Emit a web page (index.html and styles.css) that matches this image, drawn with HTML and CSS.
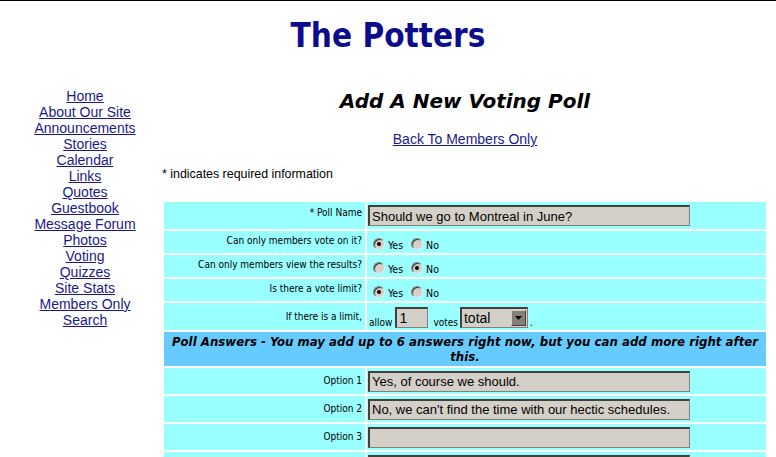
FILE: index.html
```html
<!DOCTYPE html>
<html>
<head>
<meta charset="utf-8">
<title>The Potters - Add A New Voting Poll</title>
<link rel="stylesheet" href="styles.css">
</head>
<body>
<div class="page">
  <h1 class="site-title">The Potters</h1>
  <div class="layout">
    <nav class="nav">
      <a href="#">Home</a>
      <a href="#">About Our Site</a>
      <a href="#">Announcements</a>
      <a href="#">Stories</a>
      <a href="#">Calendar</a>
      <a href="#">Links</a>
      <a href="#">Quotes</a>
      <a href="#">Guestbook</a>
      <a href="#">Message Forum</a>
      <a href="#">Photos</a>
      <a href="#">Voting</a>
      <a href="#">Quizzes</a>
      <a href="#">Site Stats</a>
      <a href="#">Members Only</a>
      <a href="#">Search</a>
    </nav>
    <main class="main">
      <h2 class="page-title">Add A New Voting Poll</h2>
      <p class="back"><a href="#">Back To Members Only</a></p>
      <p class="note">* indicates required information</p>
      <table class="form">
        <tr class="r27">
          <td class="label up4">* Poll Name</td>
          <td class="value"><input class="text" type="text" value="Should we go to Montreal in June?"></td>
        </tr>
        <tr class="r22">
          <td class="label up3">Can only members vote on it?</td>
          <td class="value">
            <span class="choices">
              <label class="choice"><input class="radio" type="radio" name="mvote" checked><span class="small">Yes</span></label>
              <label class="choice"><input class="radio" type="radio" name="mvote"><span class="small">No</span></label>
            </span>
          </td>
        </tr>
        <tr class="r22">
          <td class="label up3">Can only members view the results?</td>
          <td class="value">
            <span class="choices">
              <label class="choice"><input class="radio" type="radio" name="mview"><span class="small">Yes</span></label>
              <label class="choice"><input class="radio" type="radio" name="mview" checked><span class="small">No</span></label>
            </span>
          </td>
        </tr>
        <tr class="r22">
          <td class="label up3">Is there a vote limit?</td>
          <td class="value">
            <span class="choices">
              <label class="choice"><input class="radio" type="radio" name="limit" checked><span class="small">Yes</span></label>
              <label class="choice"><input class="radio" type="radio" name="limit"><span class="small">No</span></label>
            </span>
          </td>
        </tr>
        <tr class="r27">
          <td class="label">If there is a limit,</td>
          <td class="value">
            <span class="limit">
              <span class="small allow">allow</span>
              <input class="text short" type="text" value="1">
              <span class="small votes">votes</span>
              <span class="select"><span class="select-value">total</span><span class="select-btn"><svg width="7" height="4" viewBox="0 0 7 4"><path d="M0 0H7L3.5 4Z" fill="#000"/></svg></span></span>
              <span class="small dot">.</span>
            </span>
          </td>
        </tr>
        <tr class="head">
          <td colspan="2">Poll Answers - You may add up to 6 answers right now, but you can add more right after this.</td>
        </tr>
        <tr class="r26">
          <td class="label">Option 1</td>
          <td class="value"><input class="text" type="text" value="Yes, of course we should."></td>
        </tr>
        <tr class="r26">
          <td class="label">Option 2</td>
          <td class="value"><input class="text" type="text" value="No, we can't find the time with our hectic schedules."></td>
        </tr>
        <tr class="r26">
          <td class="label">Option 3</td>
          <td class="value"><input class="text" type="text" value=""></td>
        </tr>
        <tr class="r26">
          <td class="label">Option 4</td>
          <td class="value"><input class="text" type="text" value=""></td>
        </tr>
      </table>
    </main>
  </div>
</div>
</body>
</html>
```
FILE: styles.css
```css
* { box-sizing: border-box; }

html, body {
  margin: 0;
  background: #fff;
}

body {
  border-top: 1px solid #000;
  color: #000;
  font-family: "Liberation Sans", Arial, sans-serif;
  overflow: hidden;
}

.page {
  padding: 0 8px;
}

.site-title {
  margin: 0;
  padding-top: 15px;
  font: bold 33px/40px "DejaVu Sans Condensed", "DejaVu Sans", sans-serif;
  color: #0c0c8c;
  text-align: center;
}

.layout {
  display: flex;
  margin-top: 32px;
}

.nav {
  width: 154px;
  flex: none;
  display: flex;
  flex-direction: column;
  align-items: center;
  font-size: 14px;
  line-height: 16px;
}

.nav a {
  color: #1a1a8a;
}

.main {
  flex: 1;
  min-width: 0;
  text-align: center;
}

.page-title {
  margin: 1px 0 0;
  font: bold oblique 20px/24px "DejaVu Sans", sans-serif;
  color: #000;
}

.back {
  margin: 18px 0 0;
  font-size: 14px;
  line-height: 16px;
}

.back a {
  color: #1a1a8a;
}

.note {
  margin: 20px 0 0;
  text-align: left;
  font-size: 12.4px;
  line-height: 14px;
}

.form {
  margin-top: 19px;
  width: 100%;
  border-spacing: 2px;
  border-collapse: separate;
}

.form td {
  background: #9ff;
  padding: 0 1px;
  vertical-align: middle;
}

.r27 td { height: 27px; }
.r22 td { height: 22px; }
.r26 td { height: 26px; }

.form .label {
  width: 201px;
  text-align: right;
  padding-right: 3px;
  font: 10px/12px "DejaVu Sans Condensed", "DejaVu Sans", sans-serif;
  color: #000;
}

.form .label.up4 { padding-bottom: 5px; }
.form .label.up3 { padding-bottom: 3px; }

.form .value {
  text-align: left;
}

.form .head td {
  height: 34px;
  background: #66ccff;
  text-align: center;
  padding: 0 5px;
  font: bold oblique 13px/15px "DejaVu Sans Condensed", "DejaVu Sans", sans-serif;
  letter-spacing: 0.05px;
  color: #000;
}

.text {
  display: block;
  width: 322px;
  height: 21px;
  margin: 0;
  padding: 0 2px;
  background: #d4d0c8;
  border-style: solid;
  border-width: 2px 1px 1px 2px;
  border-color: #404040 #808080 #808080 #404040;
  font: 13px "Liberation Sans", Arial, sans-serif;
  color: #000;
  outline: none;
}

.choices {
  display: flex;
  align-items: flex-end;
  padding-top: 3px;
}

.choice {
  display: inline-flex;
  align-items: flex-end;
  margin-right: 3px;
}

.radio {
  appearance: none;
  -webkit-appearance: none;
  width: 12px;
  height: 12px;
  margin: 0 3px 0 5px;
  border-radius: 50%;
  background: #d4d0c8;
  border: 1px solid;
  border-color: #808080 #e8e8e8 #e8e8e8 #808080;
  box-shadow: inset 1px 1px 0 #404040;
  position: relative;
}

.radio:checked::after {
  content: "";
  position: absolute;
  left: 3px;
  top: 3px;
  width: 4px;
  height: 4px;
  border-radius: 50%;
  background: #000;
}

.small {
  font: 10px/10px "DejaVu Sans Condensed", "DejaVu Sans", sans-serif;
  color: #000;
}

.choice .small {
  font-size: 10.5px;
}

.limit {
  display: flex;
  align-items: flex-end;
  padding-top: 2px;
}

.allow { margin: 0 3px 0 1px; }

.text.short {
  width: 33px;
  font-size: 14px;
}

.votes { margin: 0 2px 0 5px; }

.select {
  display: flex;
  align-items: center;
  width: 68px;
  height: 21px;
  background: #d4d0c8;
  border-style: solid;
  border-width: 2px 1px 1px 2px;
  border-color: #404040 #808080 #808080 #404040;
  padding: 0 1px 0 2px;
}

.select-value {
  flex: 1;
  font: 14px "Liberation Sans", Arial, sans-serif;
  line-height: 16px;
}

.select-btn {
  width: 15px;
  height: 16px;
  display: flex;
  align-items: center;
  justify-content: center;
  background: #877f77;
  border: 1px solid;
  border-color: #d4d0c8 #404040 #404040 #d4d0c8;
}

.dot { margin-left: 2px; }
```
